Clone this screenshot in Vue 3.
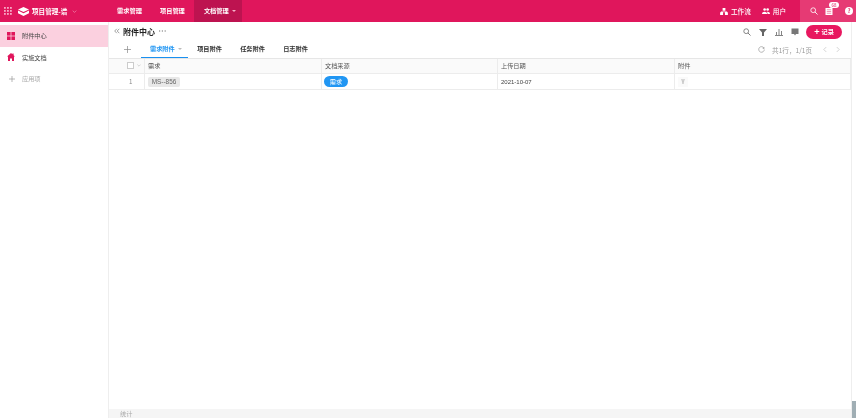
<script setup>
const navItems = [
  { label: '需求管理' },
  { label: '项目管理' },
  { label: '文档管理', active: true, caret: true }
]
const tabs = ['需求附件', '项目附件', '任务附件', '日志附件']
const columns = ['需求', '文档来源', '上传日期', '附件']
</script>

<template>
  <div class="page">
    <header class="topbar">
      <div class="brand">
        <svg class="grid-icon" viewBox="0 0 8 8" width="8" height="8"><g fill="#f7a8c4"><rect v-for="n in 9" :key="n" :x="((n-1)%3)*3" :y="Math.floor((n-1)/3)*3" width="1.8" height="1.8"/></g></svg>
        <svg class="logo" viewBox="0 0 11 9" width="11" height="9"><path d="M5.5 0 11 2.4 5.5 5 0 2.4Z" fill="#fff"/><path d="M0 3.6 5.5 6.2 11 3.6v2.6L5.5 9 0 6.2Z" fill="#fff"/></svg>
        <span class="brand-name">项目管理-谱</span>
        <svg class="chev" viewBox="0 0 8 5" width="5" height="3"><path d="M1 1l3 3 3-3" fill="none" stroke="#f5a3c0" stroke-width="1"/></svg>
      </div>
      <nav class="nav">
        <a v-for="i in navItems" :key="i.label" class="nav-item" :class="{ active: i.active }">
          {{ i.label }}<i v-if="i.caret" class="caret"></i>
        </a>
      </nav>
      <div class="top-right">
        <span class="top-link">
          <svg viewBox="0 0 10 9" width="8" height="7"><path d="M3.2 0h3.6v3.4H3.2ZM0 5.4h3.8V9H0ZM6.2 5.4H10V9H6.2ZM1 4.4h8v1H1Z" fill="#fff"/></svg>
          工作流
        </span>
        <span class="top-link">
          <svg viewBox="0 0 11 8" width="8" height="6"><circle cx="3.6" cy="2" r="1.8" fill="#fff"/><circle cx="7.8" cy="2" r="1.8" fill="#fff"/><path d="M0 8c0-4 7-4 7 0ZM7.6 8c0-1.2-.3-2.2-1-3 2-.5 4.4.5 4.4 3Z" fill="#fff"/></svg>
          用户
        </span>
        <div class="top-tools">
          <svg viewBox="0 0 10 10" width="8" height="8"><circle cx="4" cy="4" r="3" fill="none" stroke="#fff" stroke-width="1"/><path d="M6.2 6.2 9.4 9.4" stroke="#fff" stroke-width="1.1"/></svg>
          <span class="bell">
            <svg viewBox="0 0 8 8" width="8" height="7"><path d="M0 0h8v8H0Z" fill="#fff"/><path d="M1.5 2h5M1.5 4h5M1.5 6h5" stroke="#e8507f" stroke-width=".7"/></svg>
            <b class="badge">68</b>
          </span>
          <span class="help">?</span>
        </div>
      </div>
    </header>

    <div class="body">
      <aside class="sidebar">
        <div class="side-item selected">
          <svg viewBox="0 0 8 8" width="8" height="8"><g fill="#e0165c"><rect width="3.6" height="3.6"/><rect x="4.4" width="3.6" height="3.6"/><rect y="4.4" width="3.6" height="3.6"/><rect x="4.4" y="4.4" width="3.6" height="3.6"/></g></svg>
          <span>附件中心</span>
        </div>
        <div class="side-item">
          <svg viewBox="0 0 8 8" width="8" height="8"><path d="M4 0 5.4 1.2V.6h1.2v1.6L8 3.4H7V8H5V5.5H3V8H1V3.4H0Z" fill="#e0165c"/></svg>
          <span>实施文档</span>
        </div>
        <div class="side-item muted">
          <svg class="plus-icon" viewBox="0 0 6 6" width="6" height="6"><path d="M3 0v6M0 3h6" stroke="#999" stroke-width=".7"/></svg>
          <span>应用项</span>
        </div>
      </aside>

      <main class="main">
        <div class="title-row">
          <div class="title-left">
            <svg class="back" viewBox="0 0 6 6" width="6" height="6"><path d="M2.8.8.7 3l2.1 2.2M5.3.8 3.2 3l2.1 2.2" fill="none" stroke="#888" stroke-width=".8"/></svg>
            <span class="title">附件中心</span>
            <svg class="dots" viewBox="0 0 7 2" width="7" height="2"><g fill="#888"><rect width="1.2" height="1.2" y=".4"/><rect x="2.8" width="1.2" height="1.2" y=".4"/><rect x="5.6" width="1.2" height="1.2" y=".4"/></g></svg>
          </div>
          <div class="actions">
            <svg viewBox="0 0 10 10" width="8" height="8"><circle cx="4" cy="4" r="3" fill="none" stroke="#777" stroke-width="1.1"/><path d="M6.2 6.2 9.4 9.4" stroke="#777" stroke-width="1.2"/></svg>
            <svg viewBox="0 0 8 8" width="8" height="8"><path d="M0 1h8L5 4.4V8H3V4.4Z" fill="#666"/></svg>
            <svg viewBox="0 0 8 8" width="8" height="8"><path d="M0 7.5h8M1.5 7V4M4 7V1M6.5 7V3" stroke="#777" stroke-width=".9" fill="none"/></svg>
            <svg viewBox="0 0 8 8" width="8" height="8"><path d="M.5 .5h7v5.5H5L4 7.5 3 6H.5Z" fill="#777"/></svg>
            <button class="add-btn"><span class="plus">+</span><span class="add-label">记录</span></button>
          </div>
        </div>

        <div class="tab-row">
          <span class="tab-add">
            <svg viewBox="0 0 7 7" width="7" height="7"><path d="M3.5 0v7M0 3.5h7" stroke="#888" stroke-width=".7"/></svg>
          </span>
          <div class="tabs">
            <span v-for="(t, i) in tabs" :key="t" class="tab" :class="{ on: i === 0 }">
              {{ t }}<i v-if="i === 0" class="tab-caret"></i>
            </span>
          </div>
          <div class="pager">
            <svg viewBox="0 0 8 8" width="7" height="7"><path d="M6.8 2.4A3.2 3.2 0 1 0 7.2 4" fill="none" stroke="#999" stroke-width=".8"/><path d="M7.2.8v2.2H5Z" fill="#999"/></svg>
            <span class="pager-text">共1行，1/1页</span>
            <svg viewBox="0 0 5 8" width="4" height="7"><path d="M4 1 1 4l3 3" fill="none" stroke="#bbb" stroke-width=".8"/></svg>
            <svg viewBox="0 0 5 8" width="4" height="7"><path d="M1 1l3 3-3 3" fill="none" stroke="#bbb" stroke-width=".8"/></svg>
          </div>
        </div>

        <div class="table">
          <div class="row head">
            <div class="cell index">
              <i class="check"></i>
              <svg viewBox="0 0 6 4" width="4" height="3"><path d="M.5.5 3 3 5.5.5" fill="none" stroke="#aaa" stroke-width=".7"/></svg>
            </div>
            <div v-for="c in columns" :key="c" class="cell">{{ c }}</div>
          </div>
          <div class="row">
            <div class="cell index num">1</div>
            <div class="cell"><span class="chip">MS--856</span></div>
            <div class="cell"><span class="pill">需求</span></div>
            <div class="cell date">2021-10-07</div>
            <div class="cell"><span class="file">
              <svg viewBox="0 0 6 7" width="4" height="5"><path d="M0 .8h6M1 2.4h4M2.4 2.4v4.2h1.2V2.4" stroke="#aaa" stroke-width=".8" fill="none"/></svg>
            </span></div>
          </div>
        </div>

        <div class="spacer"></div>
        <footer class="footer"><span>统计</span></footer>
      </main>

      <div class="scroll"><i class="thumb"></i></div>
    </div>
  </div>
</template>

<style>
html, body { margin: 0; background: #fff; }
</style>

<style scoped>
.page {
  width: 856px;
  height: 418px;
  display: flex;
  flex-direction: column;
  overflow: hidden;
  font-family: "Noto Sans CJK SC", "Liberation Sans", sans-serif;
  font-size: 6.2px;
  color: #444;
  background: #fff;
  filter: blur(0.25px);
}
.topbar {
  height: 22px;
  flex: none;
  display: flex;
  align-items: stretch;
  background: #e0165c;
  color: #fff;
}
.brand {
  width: 108px;
  flex: none;
  display: flex;
  align-items: center;
  padding-left: 4px;
  box-sizing: border-box;
}
.logo { margin-left: 6px; }
.brand-name { margin-left: 3px; font-size: 6.6px; font-weight: 700; white-space: nowrap; margin-bottom: 1px; }
.chev { margin-left: 5px; }
.nav { display: flex; }
.nav-item {
  padding: 0 9.1px 1px;
  display: flex;
  align-items: center;
  font-weight: 700;
  white-space: nowrap;
}
.nav-item.active { background: #bd1350; width: 48px; box-sizing: border-box; padding: 0 0 1px 10px; }
.caret {
  margin-left: 3px;
  border: 2.2px solid transparent;
  border-top-color: #f5b3c9;
  border-bottom: 0;
  width: 0;
  height: 0;
}
.top-right { margin-left: auto; display: flex; align-items: stretch; }
.top-link {
  display: flex;
  align-items: center;
  gap: 3px;
  margin-right: 11px;
  font-size: 6.6px;
  font-weight: 500;
  white-space: nowrap;
}
.top-link:nth-child(2) { margin-right: 14px; }
.top-tools {
  width: 56px;
  box-sizing: border-box;
  background: #e63a74;
  display: flex;
  align-items: center;
  gap: 7px;
  padding-left: 10px;
}
.bell { position: relative; display: flex; margin-top: 1px; }
.badge {
  position: absolute;
  left: 4px;
  top: -6px;
  min-width: 10px;
  height: 6px;
  line-height: 6px;
  border-radius: 3px;
  background: #fff;
  color: #e0165c;
  font-size: 4.5px;
  font-weight: 400;
  text-align: center;
}
.help {
  width: 8px;
  height: 8px;
  border-radius: 50%;
  background: #fff;
  color: #e63a74;
  font-size: 6px;
  font-weight: 700;
  line-height: 8px;
  text-align: center;
  margin-left: 5px;
  margin-bottom: 1px;
}
.body { flex: 1; display: flex; min-height: 0; }
.sidebar {
  width: 109px;
  flex: none;
  box-sizing: border-box;
  border-right: 1px solid #eee;
  padding-top: 3px;
}
.side-item {
  height: 21.5px;
  display: flex;
  align-items: center;
  gap: 7px;
  padding-left: 7px;
  color: #444;
}
.side-item.selected { background: #fbd0df; }
.side-item.muted { color: #aaa; }
.plus-icon { margin: 0 0 0 2px; }
.main { flex: 1; min-width: 0; display: flex; flex-direction: column; }
.title-row {
  height: 20px;
  display: flex;
  align-items: center;
  justify-content: space-between;
  padding: 0 9px 0 5px;
  flex: none;
}
.title-left { display: flex; align-items: center; gap: 3px; margin-bottom: 2px; }
.title { color: #222; font-size: 8px; font-weight: 700; }
.dots { margin-left: 1px; }
.actions { display: flex; align-items: center; gap: 8px; }
.add-btn {
  width: 36px;
  height: 14px;
  border: 0;
  padding: 0;
  border-radius: 7px;
  background: #e8175f;
  color: #fff;
  font: 700 6.2px "Noto Sans CJK SC", sans-serif;
  margin-left: -1px;
  display: flex;
  align-items: center;
  justify-content: center;
  gap: 2px;
}
.plus { font-size: 9px; line-height: 1; margin-bottom: 1px; }
.add-label { margin-bottom: 1px; }
.tab-row {
  height: 16px;
  display: flex;
  align-items: stretch;
  flex: none;
}
.tab-add { width: 32px; box-sizing: border-box; padding-left: 15px; display: flex; align-items: center; margin-bottom: 2px; }
.tabs { display: flex; }
.tab {
  display: flex;
  align-items: center;
  justify-content: center;
  width: 43px;
  height: 16px;
  box-sizing: border-box;
  padding-bottom: 3px;
  color: #333;
  white-space: nowrap;
  font-weight: 700;
}
.tab.on {
  width: 47px;
  color: #2196f3;
  justify-content: flex-start;
  padding-left: 9px;
  padding-bottom: 2px;
  border-bottom: 1px solid #1a90f0;
}
.tab-caret {
  margin-left: 3px;
  border: 2px solid transparent;
  border-top-color: #bbb;
  border-bottom: 0;
}
.pager {
  margin-left: auto;
  display: flex;
  align-items: center;
  gap: 5px;
  padding: 0 11px 1px 0;
  color: #999;
  font-size: 6.6px;
}
.pager-text { margin: 0 6px 0 2px; }
.pager svg:last-child { margin-left: 4px; }
.table { flex: none; }
.row {
  display: grid;
  grid-template-columns: 36px 177px 176px 177px 176px;
  height: 16px;
  box-sizing: border-box;
  border-bottom: 1px solid #ececec;
}
.row.head { background: #fafafa; border-top: 1px solid #e6e6e6; }
.row.head .cell { padding-bottom: 1px; }
.cell {
  display: flex;
  align-items: center;
  padding-left: 3px;
  border-right: 1px solid #ececec;
  color: #555;
  min-width: 0;
}
.cell.index { gap: 3px; padding: 0 0 0 18px; }
.cell.num { color: #888; padding: 0 0 0 20px; }
.check {
  width: 5px;
  height: 5px;
  border: 1px solid #ccc;
  background: #fff;
}
.chip {
  width: 32px;
  height: 10px;
  line-height: 10px;
  text-align: center;
  border-radius: 2px;
  background: #e8e8e8;
  color: #666;
  font-family: "Liberation Sans", sans-serif;
  font-size: 6.4px;
  margin-top: 1px;
}
.pill {
  width: 24px;
  height: 11px;
  line-height: 11px;
  border-radius: 6px;
  background: #2196f3;
  color: #fff;
  text-align: center;
  margin-left: -1px;
}
.date { color: #444; font-family: "Liberation Sans", sans-serif; font-size: 6px; }
.file {
  width: 10px;
  height: 10px;
  display: flex;
  align-items: center;
  justify-content: center;
  background: #fafafa;
}
.spacer { flex: 1; }
.footer {
  height: 9px;
  flex: none;
  background: #f5f5f5;
  color: #aaa;
  padding-left: 11px;
  overflow: hidden;
  line-height: 10px;
}
.scroll {
  width: 5px;
  flex: none;
  position: relative;
  border-left: 1px solid #eee;
  box-sizing: border-box;
}
.thumb {
  position: absolute;
  left: 0;
  right: 0;
  bottom: 0;
  height: 17px;
  background: #a0aeb4;
}
</style>
